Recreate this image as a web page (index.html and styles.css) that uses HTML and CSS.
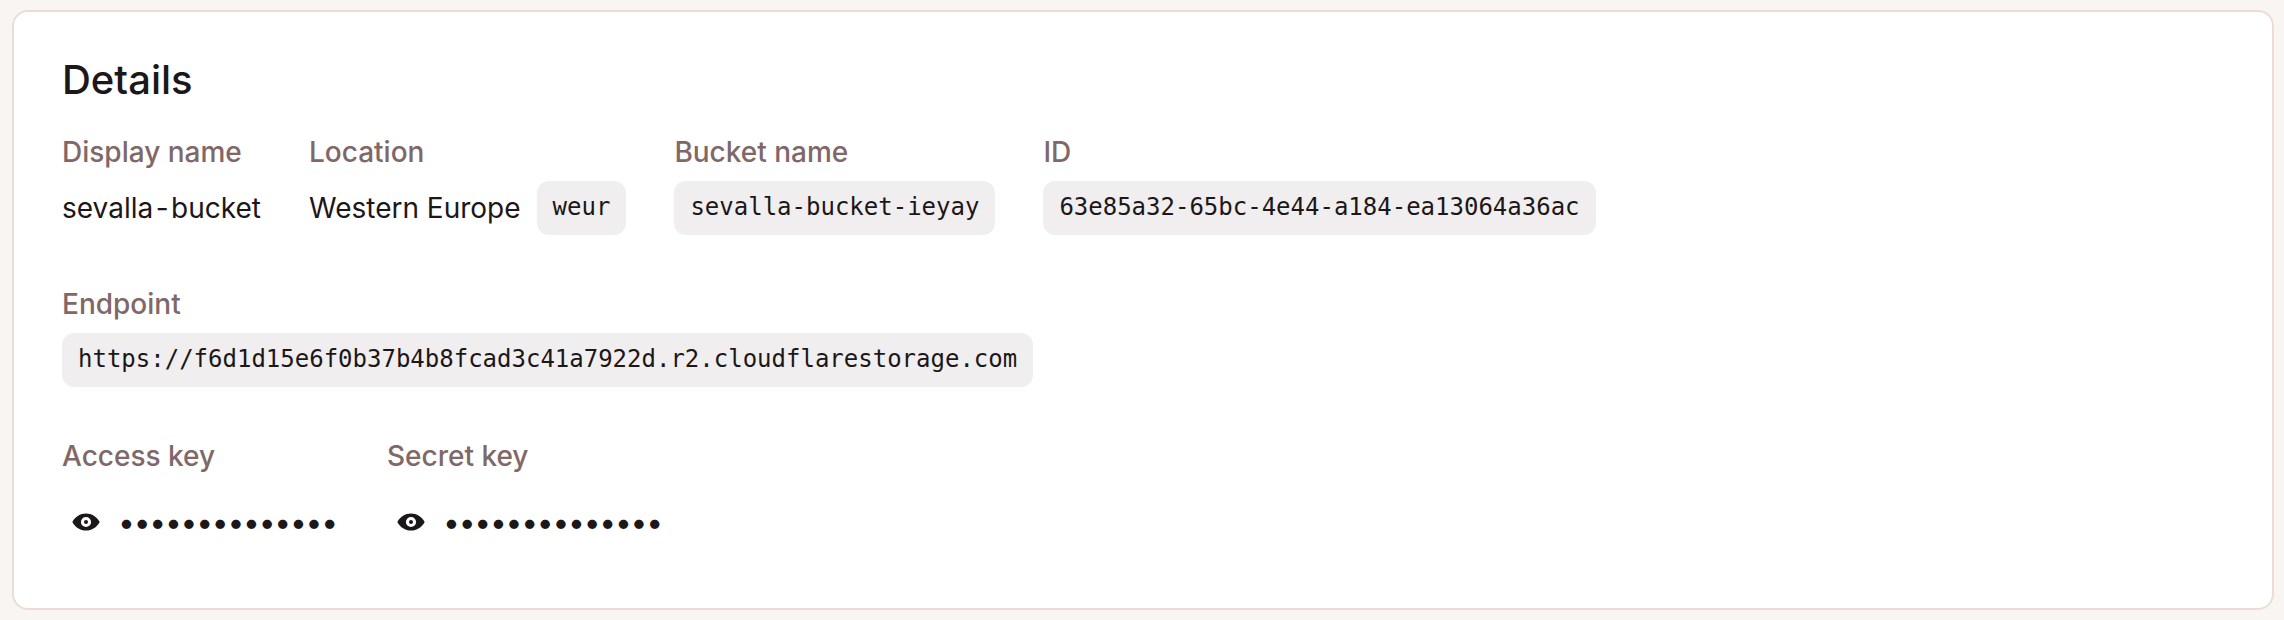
FILE: index.html
```
<!DOCTYPE html>
<html lang="en">
<head>
    <meta charset="UTF-8">
    <title>Details</title>
    <link rel="stylesheet" href="styles.css">
</head>
<body>
<div class="card">
    <h2>Details</h2>
    <div class="row">
        <div class="item">
            <div class="label">Display name</div>
            <div class="value"><span>sevall<span class="hyphen">a-</span>bucket</span></div>
        </div>
        <div class="item">
            <div class="label">Location</div>
            <div class="value"><span>Western Europe</span><code>weur</code></div>
        </div>
        <div class="item">
            <div class="label">Bucket name</div>
            <div class="value"><code>sevalla-bucket-ieyay</code></div>
        </div>
        <div class="item">
            <div class="label">ID</div>
            <div class="value"><code>63e85a32-65bc-4e44-a184-ea13064a36ac</code></div>
        </div>
    </div>
    <div class="row">
        <div class="item">
            <div class="label">Endpoint</div>
            <div class="value"><code>https://f6d1d15e6f0b37b4b8fcad3c41a7922d.r2.cloudflarestorage.com</code></div>
        </div>
    </div>
    <div class="row">
        <div class="item">
            <div class="label">Access key</div>
            <div class="secret">
                <button class="eye" type="button" aria-label="Show access key">
                    <svg viewBox="0 0 28 20" width="28" height="20">
                        <path fill="currentColor" fill-rule="evenodd" d="M14 1.4C8.2 1.4 3.2 4.8.7 9.2a1.5 1.5 0 0 0 0 1.6C3.2 15.2 8.2 18.6 14 18.6s10.800-3.4 13.3-7.8a1.5 1.5 0 0 0 0-1.600C24.8 4.8 19.8 1.4 14 1.4zM14 4.9a5.100 5.100 0 1 1 0 10.200a5.100 5.100 0 0 1 0-10.200z"/>
                        <circle cx="14" cy="10" r="2" fill="currentColor"/>
                    </svg>
                </button>
                <span class="dots">••••••••••••••</span>
            </div>
        </div>
        <div class="item">
            <div class="label">Secret key</div>
            <div class="secret">
                <button class="eye" type="button" aria-label="Show secret key">
                    <svg viewBox="0 0 28 20" width="28" height="20">
                        <path fill="currentColor" fill-rule="evenodd" d="M14 1.4C8.2 1.4 3.2 4.8.7 9.2a1.5 1.5 0 0 0 0 1.6C3.2 15.2 8.2 18.6 14 18.6s10.800-3.4 13.3-7.8a1.5 1.5 0 0 0 0-1.600C24.8 4.8 19.8 1.4 14 1.4zM14 4.9a5.100 5.100 0 1 1 0 10.200a5.100 5.100 0 0 1 0-10.200z"/>
                        <circle cx="14" cy="10" r="2" fill="currentColor"/>
                    </svg>
                </button>
                <span class="dots">••••••••••••••</span>
            </div>
        </div>
    </div>
</div>
</body>
</html>
```
FILE: styles.css
```
* {
    box-sizing: border-box;
    margin: 0;
    padding: 0;
}

body {
    padding: 10px 10px 10px 12px;
    background: #f9f5f2;
    color: #1c1718;
    font-family: Inter, "Liberation Sans", sans-serif;
    font-size: 28px;
}

.card {
    height: 600px;
    padding: 42px 48px;
    border: 2px solid #ebddd6;
    border-radius: 16px;
    background: #fff;
}

h2 {
    margin-bottom: 26px;
    font-size: 40px;
    font-weight: 500;
    line-height: 52px;
}

.row {
    display: flex;
    gap: 48px;
    height: 104px;
    margin-bottom: 48px;
}

.label {
    margin-bottom: 9px;
    color: #806768;
    font-weight: 500;
    line-height: 40px;
}

.value {
    display: flex;
    align-items: center;
    gap: 16px;
    height: 54px;
    white-space: nowrap;
}

.hyphen {
    letter-spacing: 2.5px;
}

code {
    height: 54px;
    padding: 0 16px;
    border-radius: 12px;
    background: #f1eeef;
    font-family: "DejaVu Sans Mono", monospace;
    font-size: 24px;
    line-height: 52px;
}

.secret {
    display: flex;
    align-items: center;
    gap: 18px;
    width: 277px;
    height: 74px;
    padding-left: 10px;
    white-space: nowrap;
}

.eye {
    display: flex;
    align-items: center;
    justify-content: center;
    width: 28px;
    height: 40px;
    border: 0;
    background: none;
    color: inherit;
}

.dots {
    font-size: 30px;
    letter-spacing: -1.25px;
}
```
